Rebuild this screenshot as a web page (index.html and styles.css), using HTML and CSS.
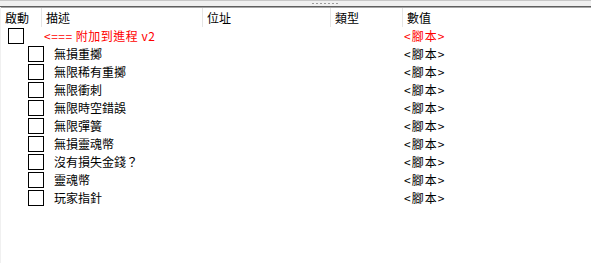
FILE: index.html
```html
<!DOCTYPE html>
<html lang="zh-Hant">
<head>
<meta charset="UTF-8">
<title>Cheat Table</title>
<link rel="stylesheet" href="styles.css">
</head>
<body>
<div class="splitter"><span class="grip"></span></div>
<div class="table">
  <div class="header">
    <div class="hcell">啟動</div>
    <div class="hcell sep">描述</div>
    <div class="hcell sep">位址</div>
    <div class="hcell sep">類型</div>
    <div class="hcell sep">數值</div>
  </div>
  <div class="row root">
    <div class="main"><span class="check"></span><span class="desc">&lt;=== 附加到進程 v2</span></div>
    <div class="value">&lt;腳本&gt;</div>
  </div>
  <div class="row child">
    <div class="main"><span class="check"></span><span class="desc">無損重擲</span></div>
    <div class="value">&lt;腳本&gt;</div>
  </div>
  <div class="row child">
    <div class="main"><span class="check"></span><span class="desc">無限稀有重擲</span></div>
    <div class="value">&lt;腳本&gt;</div>
  </div>
  <div class="row child">
    <div class="main"><span class="check"></span><span class="desc">無限衝刺</span></div>
    <div class="value">&lt;腳本&gt;</div>
  </div>
  <div class="row child">
    <div class="main"><span class="check"></span><span class="desc">無限時空錯誤</span></div>
    <div class="value">&lt;腳本&gt;</div>
  </div>
  <div class="row child">
    <div class="main"><span class="check"></span><span class="desc">無限彈簧</span></div>
    <div class="value">&lt;腳本&gt;</div>
  </div>
  <div class="row child">
    <div class="main"><span class="check"></span><span class="desc">無損靈魂幣</span></div>
    <div class="value">&lt;腳本&gt;</div>
  </div>
  <div class="row child">
    <div class="main"><span class="check"></span><span class="desc">沒有損失金錢？</span></div>
    <div class="value">&lt;腳本&gt;</div>
  </div>
  <div class="row child">
    <div class="main"><span class="check"></span><span class="desc">靈魂幣</span></div>
    <div class="value">&lt;腳本&gt;</div>
  </div>
  <div class="row child">
    <div class="main"><span class="check"></span><span class="desc">玩家指針</span></div>
    <div class="value">&lt;腳本&gt;</div>
  </div>
</div>
</body>
</html>
```

FILE: styles.css
```css
html, body {
  margin: 0;
  height: 100%;
  background: #fff;
}

body {
  display: flex;
  flex-direction: column;
  font-family: "Noto Sans CJK TC", "Noto Sans", sans-serif;
  font-size: 12px;
  color: #000;
}

.splitter {
  height: 5px;
  background: #f0f0f0;
  border-top: 1px solid #c8c8c8;
  border-bottom: 1px solid #5f5f5f;
  box-shadow: 0 1px 0 #a8a8a8;
  display: flex;
  align-items: center;
}

.grip {
  margin-left: 312px;
  width: 27px;
  height: 1px;
  background: repeating-linear-gradient(to right, #9a9a9a 0 2px, transparent 2px 4px);
}

.table {
  flex: 1;
  border-left: 1px solid #f0f0f0;
  padding-top: 1px;
}

.header {
  display: grid;
  grid-template-columns: 40px 161px 128px 72px 1fr;
  height: 19px;
  line-height: 19px;
}

.hcell {
  padding-left: 4px;
  white-space: nowrap;
}

.hcell.sep {
  border-left: 1px solid #e5e5e5;
}

.row {
  display: flex;
  height: 18px;
  line-height: 18px;
}

.main {
  width: 403px;
  display: flex;
  align-items: center;
}

.check {
  width: 14px;
  height: 14px;
  border: 1px solid #000;
  flex: none;
}

.root .check {
  margin-left: 7px;
}

.root .desc {
  margin-left: 20px;
  color: #ff0000;
  letter-spacing: 0.5px;
}

.root .value {
  color: #ff0000;
}

.child .check {
  margin-left: 27px;
}

.child .desc {
  margin-left: 10px;
}

.desc {
  white-space: nowrap;
}

.value {
  white-space: nowrap;
  letter-spacing: 1px;
}
```
